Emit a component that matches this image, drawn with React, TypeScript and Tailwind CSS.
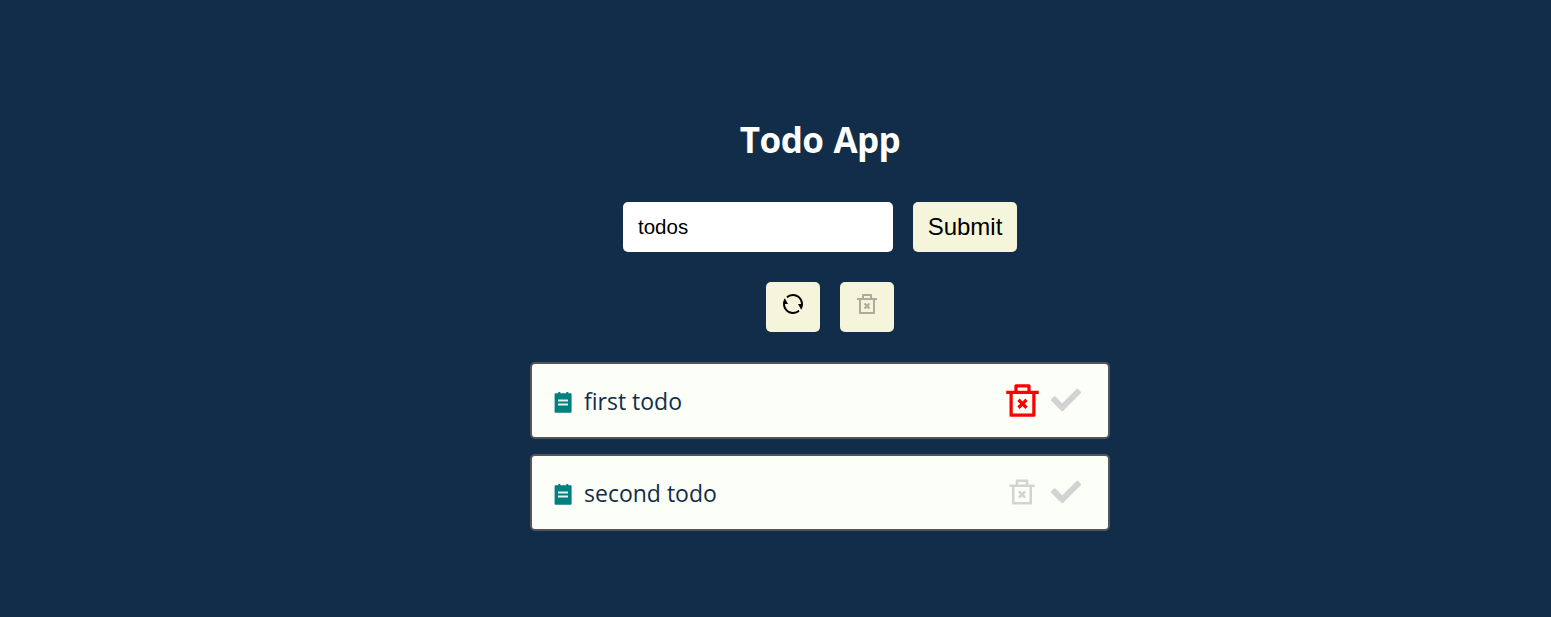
import { useState } from "react";
import { RiDeleteBin2Line, RiRefreshLine } from "react-icons/ri";
import { FaCheck } from "react-icons/fa";

function TodoIcon() {
  return (
    <svg viewBox="0 0 22 24" className="mt-[2px] h-6 w-[22px] shrink-0 fill-[#008080]">
      <path d="M3.3 3.3h3V2h2v1.3h6V2h2v1.3H18.9a.7.7 0 0 1 .7.7V22a.7.7 0 0 1-.7.7H3.3a.7.7 0 0 1-.7-.7V4a.7.7 0 0 1 .7-.7z" />
      <path d="M6 9.4h10v2H6zM6 13.4h10v2H6z" fill="#fcfff8" fillOpacity="0.9" />
    </svg>
  );
}

const todos = [
  { title: "first todo", active: true },
  { title: "second todo", active: false },
];

export default function App() {
  const [value, setValue] = useState("todos");
  return (
    <div className="flex h-[617px] flex-col items-center bg-[#122d49] pl-[89px] font-['Open_Sans',sans-serif]">
      <h1 className="mt-[115px] h-[51px] text-[35px] leading-[50px] font-bold tracking-[-0.55px] [word-spacing:1.5px] text-white">Todo App</h1>
      <form className="mt-9 flex gap-5" onSubmit={(e) => e.preventDefault()}>
        <input
          className="h-[50px] w-[270px] rounded-[5px] bg-white px-[15px] font-['Liberation_Sans',sans-serif] text-[20.5px] text-black outline-none"
          value={value}
          onChange={(e) => setValue(e.target.value)}
        />
        <button className="h-[50px] w-[104px] rounded-[5px] bg-[#f5f5dc] font-['Liberation_Sans',sans-serif] text-[24px] text-black">Submit</button>
      </form>
      <div className="mt-[30px] flex gap-5 pl-5">
        <button className="flex h-[50px] w-[54px] justify-center rounded-[5px] bg-[#f5f5dc] pt-[10px] text-black">
          <RiRefreshLine size={24} />
        </button>
        <button className="flex h-[50px] w-[54px] justify-center rounded-[5px] bg-[#f5f5dc] pt-[10px] text-[#acac9a]">
          <RiDeleteBin2Line size={24} />
        </button>
      </div>
      <ul className="mt-[30px] flex w-[580px] flex-col gap-[15px]">
        {todos.map((t) => (
          <li key={t.title} className="flex h-[77px] items-center rounded-[5px] border-2 border-[#555555] bg-[#fcfff8] pl-5 pr-[27px]">
            <TodoIcon />
            <span className="ml-[10px] grow pt-px text-[23px] text-[#132d4a] [font-variant-ligatures:none]">{t.title}</span>
            {t.active ? (
              <RiDeleteBin2Line size={39} className="mr-[9.5px] text-[#ff0000]" />
            ) : (
              <RiDeleteBin2Line size={30} className="mr-[14px] mb-px text-[#d3d3d3]" />
            )}
            <FaCheck size={30} className="mb-px text-[#d3d3d3]" />
          </li>
        ))}
      </ul>
    </div>
  );
}
